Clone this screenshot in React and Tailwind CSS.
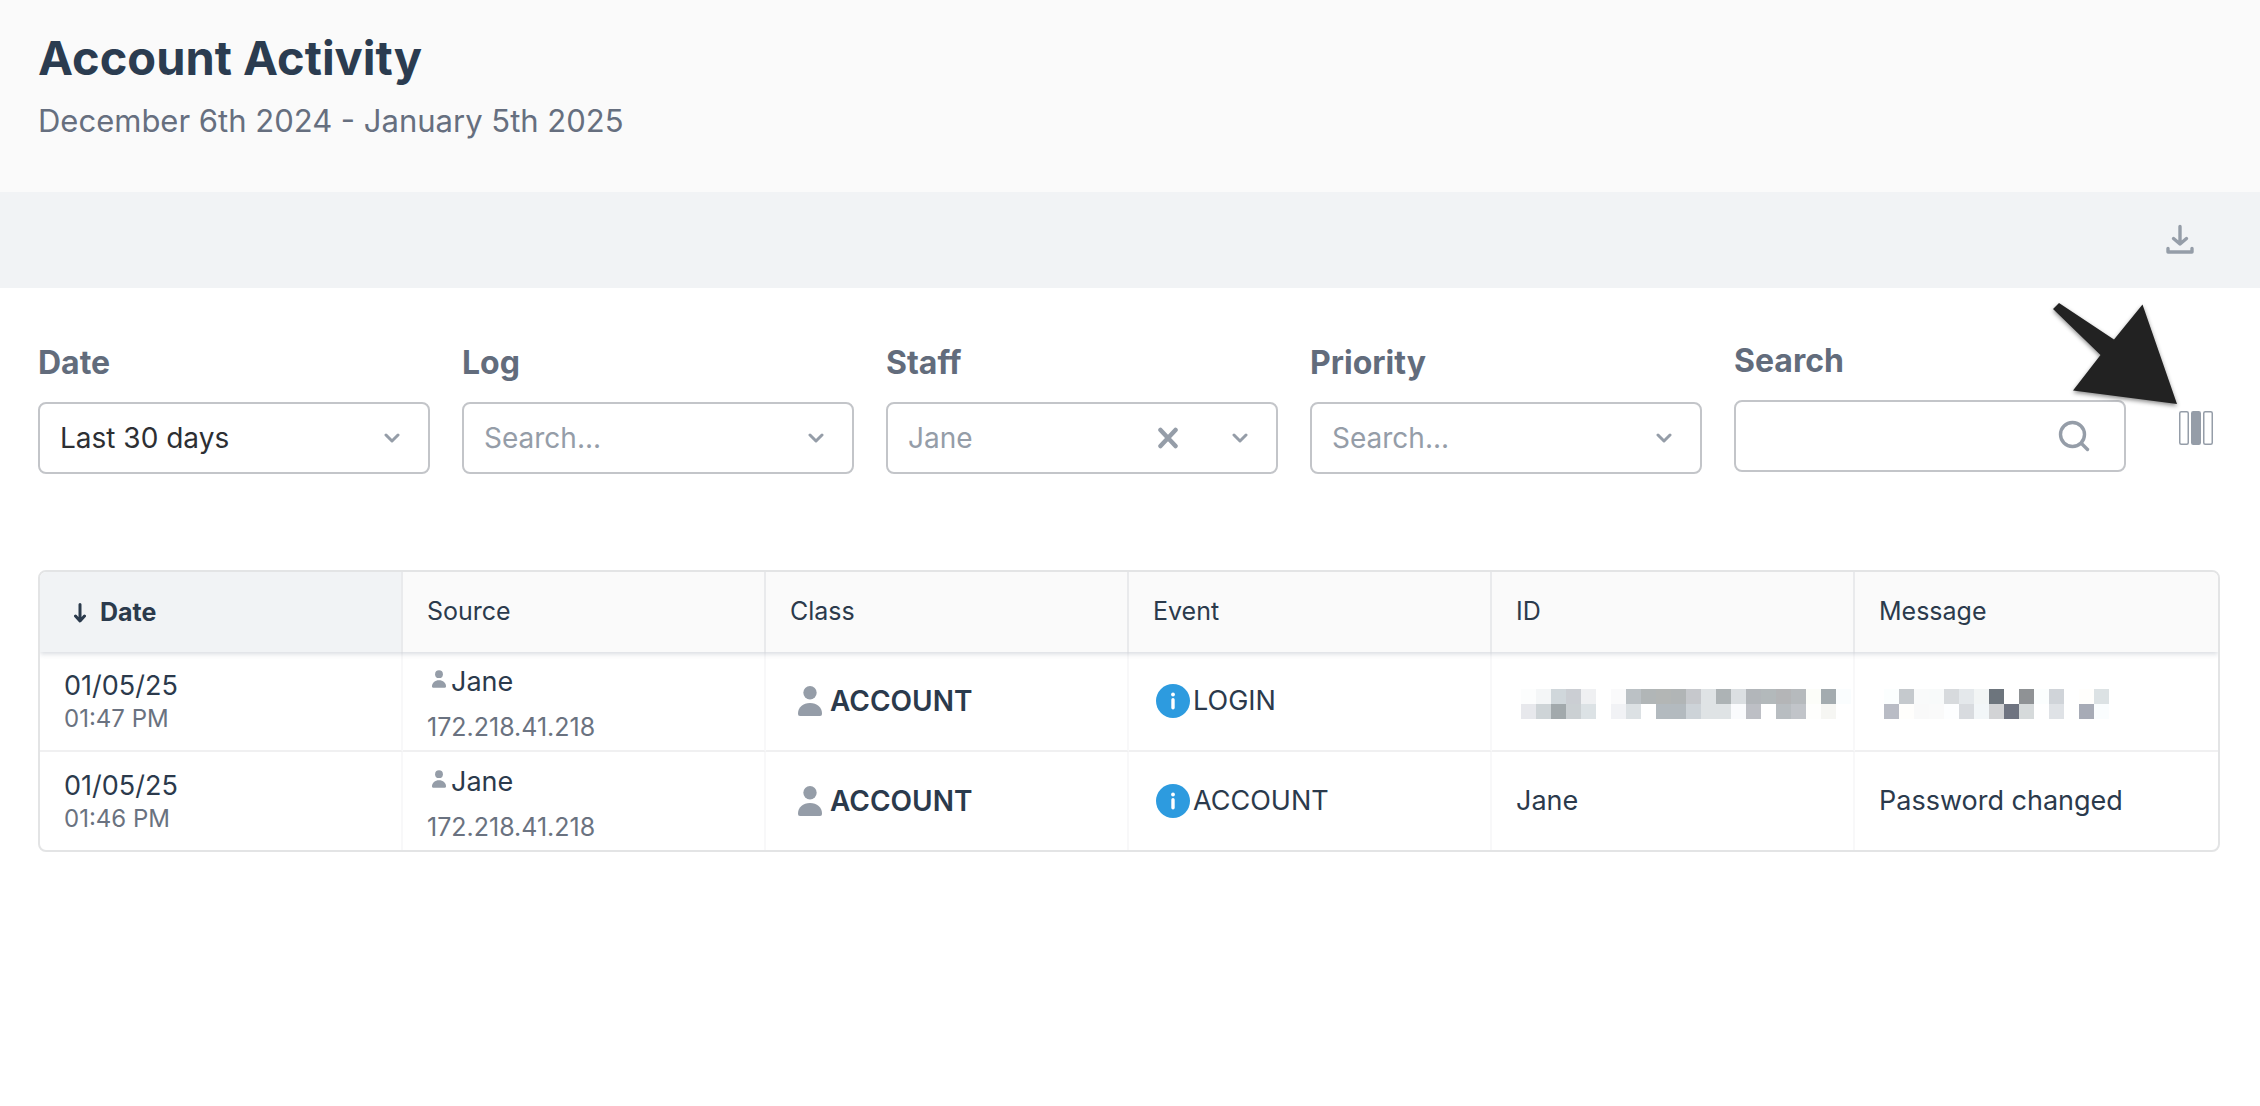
import React, { useState } from 'react';

const columns = ['Date', 'Source', 'Class', 'Event', 'ID', 'Message'];

const rows = [
  { date: '01/05/25', time: '01:47 PM', source: 'Jane', ip: '172.218.41.218', type: 'ACCOUNT', event: 'LOGIN', masked: true },
  { date: '01/05/25', time: '01:46 PM', source: 'Jane', ip: '172.218.41.218', type: 'ACCOUNT', event: 'ACCOUNT', id: 'Jane', message: 'Password changed' },
];

// Redacted values: two lines of 15px blocks, null is an empty block
const maskedId = [
  ['#fcfdfd', '#f4f6f7', '#d0d7db', '#cbced3', '#eff0f2', null, '#fafafb', '#bbc1c5', '#b1b6b7', '#b3b6b5', '#b1b5b6', '#c6c8cc', '#dfe3e5', '#adb3b5', '#dbdfe2', '#b2b6ba', '#b3b9bb', '#b4b5b7', '#b6babd', '#fcfdf9', '#a3abaf', '#fafdfe'],
  ['#e7e8ec', '#ced4d7', '#a2a9ac', '#cbd0d3', '#dce2e5', null, '#f1f2f5', '#dce1e4', '#ffffff', '#b3babf', '#b3babf', '#cdd3d8', '#dfe3e5', '#dfe3e5', '#fafbfd', '#bdbfc5', '#ffffff', '#b8bdc1', '#c1c4c9', '#fefefd', '#f6f6f3', null],
];
const maskedMessage = [
  ['#fbfefe', '#c5c9cd', '#f9fafa', '#f8fafa', '#d7dadd', '#e4e8eb', '#f2f5f5', '#6d757d', null, '#8f9295', '#fbfefe', '#d0d4d9', null, '#fffefc', '#dce2e4'],
  ['#b9bcc5', '#fffefc', '#f9f9f9', '#fafafa', '#fdfeff', '#d8dbdf', '#f2f6f8', '#d2d3d5', '#6f7481', '#d6dadb', null, '#dfe2e6', null, '#a7abb6', '#fafdfe'],
];

const Mosaic = ({ cells, label }) => (
  <svg width={cells[0].length * 15} height="30" shapeRendering="crispEdges" role="img" aria-label={label} className="ml-[5px] mt-1.5">
    {cells.map((line, y) =>
      line.map((fill, x) => fill && <rect key={`${x}-${y}`} x={x * 15} y={y * 15} width="15" height="15" fill={fill} />)
    )}
  </svg>
);

const PersonIcon = ({ className }) => (
  <svg viewBox="0 0 24 30" fill="#959da8" className={className}>
    <circle cx="12" cy="6.7" r="6.7" />
    <path d="M0 27.500C0 21.500 5 17 12 17s12 4.500 12 10.500c0 1.700-.6 2.500-2 2.500H2c-1.400 0-2-.8-2-2.500Z" />
  </svg>
);

const InfoIcon = () => (
  <svg viewBox="0 0 34 34" className="size-[34px]">
    <circle cx="17" cy="17" r="17" fill="#2d9bdf" />
    <circle cx="17" cy="10.500" r="1.900" fill="#fff" />
    <rect x="15.300" y="14" width="3.400" height="11.500" rx="1.700" fill="#fff" />
  </svg>
);

const ChevronIcon = () => (
  <svg viewBox="0 0 16 10" className="w-4 h-[10px] pointer-events-none" fill="none" stroke="#959da8" strokeWidth="3" strokeLinecap="round" strokeLinejoin="round">
    <path d="m2 2 6 6 6-6" />
  </svg>
);

const SelectFilter = ({ id, label, value, dark, clearable }) => {
  const [cleared, setCleared] = useState(false);

  return (
    <div className="flex-1 min-w-0">
      <label htmlFor={id} className="block text-[32px] leading-[42px] font-bold text-[#626c7c]">
        {label}
      </label>
      <div className="mt-[18px] grid grid-cols-[1fr_auto] items-center h-[72px] rounded-lg border-2 border-[#c3c5c9] bg-white">
        <select
          id={id}
          className={`col-start-1 col-span-2 row-start-1 w-full h-full pl-5 appearance-none bg-transparent text-[28px] outline-none ${dark ? 'text-[#2d2f33]' : 'text-[#959da8]'}`}
        >
          <option>{cleared ? 'Search...' : value}</option>
        </select>
        <div className="col-start-2 row-start-1 flex items-center gap-[54px] pr-7 pointer-events-none">
          {clearable && !cleared && (
            <button type="button" aria-label={`Clear ${label}`} className="pointer-events-auto cursor-pointer" onClick={() => setCleared(true)}>
              <svg viewBox="0 0 20 22" className="w-5 h-[22px]" stroke="#959da8" strokeWidth="4.500" strokeLinecap="round">
                <path d="m2.500 3 15 16m0-16-15 16" />
              </svg>
            </button>
          )}
          <ChevronIcon />
        </div>
      </div>
    </div>
  );
};

const App = () => {
  return (
    <div className="min-h-screen bg-white font-[Inter,'Liberation_Sans',sans-serif] text-[#2b3a4c]">
      {/* Page title */}
      <header className="bg-[#fafafa] px-[38px] pt-[30px] pb-[50px]">
        <h1 className="text-[47px] leading-[56px] font-bold text-[#2b3c50]">Account Activity</h1>
        <p className="mt-3.5 text-[31px] leading-[42px] text-[#666f7f]">December 6th 2024 - January 5th 2025</p>
      </header>

      {/* Toolbar */}
      <div className="flex h-24 items-center justify-end bg-[#f1f3f5] pr-[66px]">
        <button type="button" aria-label="Download" className="pb-0.5 cursor-pointer">
          <svg viewBox="0 0 28 30" className="w-7 h-[30px]" fill="none" stroke="#959da8" strokeWidth="3.400" strokeLinecap="round" strokeLinejoin="round">
            <path d="M14 2.500V20M7.500 14.500 14 20l6.500-5.500" />
            <path d="M2 24.500V28h24v-3.500" />
          </svg>
        </button>
      </div>

      <main className="px-[38px] pt-[54px]">
        {/* Filters */}
        <form className="flex gap-8" onSubmit={(e) => e.preventDefault()}>
          <SelectFilter id="date" label="Date" value="Last 30 days" dark />
          <SelectFilter id="log" label="Log" value="Search..." />
          <SelectFilter id="staff" label="Staff" value="Jane" clearable />
          <SelectFilter id="priority" label="Priority" value="Search..." />

          <div className="relative -mt-[2px] flex-1 min-w-0">
            <label htmlFor="search" className="block text-[32px] leading-[42px] font-bold text-[#626c7c]">
              Search
            </label>
            <div className="mt-[18px] flex h-[72px] items-center rounded-lg border-2 border-[#c3c5c9] bg-white pr-[34px]">
              <input id="search" type="text" className="min-w-0 flex-1 h-full pl-5 text-[28px] outline-none" />
              <svg viewBox="0 0 32 32" className="size-8" fill="none" stroke="#959da8" strokeWidth="3.400" strokeLinecap="round">
                <circle cx="14.500" cy="14.500" r="12" />
                <path d="m23.500 23.500 6 6" />
              </svg>
            </div>
            {/* Callout arrow */}
            <svg
              viewBox="0 0 124 102"
              className="absolute -right-[51px] -top-[37px] w-[124px] h-[102px] overflow-visible pointer-events-none drop-shadow-[0_2px_2px_rgba(0,0,0,0.45)]"
              fill="#222"
            >
              <path d="M0 6 6 0l55 36.500L89.500 1.500 124 101 20 87.500 47.500 52Z" />
            </svg>
          </div>

          <button type="button" aria-label="Choose columns" className="w-16 pl-[21px] pt-[69px] flex cursor-pointer">
            <svg viewBox="0 0 34 34" className="size-[34px]" stroke="#959da8" strokeWidth="1.500" fill="none">
              <rect x=".75" y=".75" width="8.500" height="32.500" rx="1.500" />
              <rect x="12.750" y=".75" width="8.500" height="32.500" rx="1.500" fill="#959da8" />
              <rect x="24.750" y=".75" width="8.500" height="32.500" rx="1.500" />
            </svg>
          </button>
        </form>

        {/* Activity log */}
        <div className="mt-24 mr-[2px] overflow-hidden rounded-lg border-2 border-[#e3e4e5]">
          <table className="w-full table-fixed border-separate border-spacing-0 text-left text-[27px]">
            <thead className="relative shadow-[0_2px_5px_rgba(60,75,100,0.2)]">
              <tr>
                {columns.map((name, i) => (
                  <th
                    key={name}
                    scope="col"
                    aria-sort={i === 0 ? 'descending' : undefined}
                    className={`h-20 px-6 text-[25px] ${i < 5 ? 'border-r-2 border-[#e9eaec]' : ''} ${i === 0 ? 'bg-[#f1f3f5] pt-0.5 font-bold' : 'bg-[#fafafa] font-normal'}`}
                  >
                    {i === 0 ? (
                      <span className="flex items-center gap-3.5 pl-2.5">
                        <svg viewBox="0 0 12 20" className="w-3 h-5" fill="none" stroke="currentColor" strokeWidth="3" strokeLinecap="round" strokeLinejoin="round">
                          <path d="M6 1.500v16M1.500 13 6 18l4.500-5" />
                        </svg>
                        {name}
                      </span>
                    ) : (
                      name
                    )}
                  </th>
                ))}
              </tr>
            </thead>
            <tbody className="[&_td]:px-6 [&_td]:border-r-2 [&_td]:border-r-[#f8f8f9] [&_td:last-child]:border-r-0 [&_tr:first-child_td]:border-b-2 [&_tr:first-child_td]:border-b-[#f0f0f1]">
              {rows.map((row) => (
                <tr key={row.time} className="h-[100px] last:h-[98px]">
                  <td>
                    <div className="leading-9">{row.date}</div>
                    <div className="text-[24px] leading-[30px] text-[#6a7280]">{row.time}</div>
                  </td>
                  <td className="pt-[3px]">
                    <div className="flex items-center gap-[5px] pl-[5px] leading-[48px]">
                      <PersonIcon className="w-[14px] h-[18px] mb-1.5" />
                      {row.source}
                    </div>
                    <div className="text-[25px] leading-[42px] text-[#6a7280]">{row.ip}</div>
                  </td>
                  <td>
                    <div className="flex items-center gap-2 pl-2 text-[28px] font-semibold">
                      <PersonIcon className="w-6 h-[30px]" />
                      {row.type}
                    </div>
                  </td>
                  <td>
                    <div className="flex items-center gap-[3px] pl-[3px]">
                      <InfoIcon />
                      {row.event}
                    </div>
                  </td>
                  <td>{row.masked ? <Mosaic cells={maskedId} label="Redacted ID" /> : row.id}</td>
                  <td>{row.masked ? <Mosaic cells={maskedMessage} label="Redacted message" /> : row.message}</td>
                </tr>
              ))}
            </tbody>
          </table>
        </div>
      </main>
    </div>
  );
};

export default App;
